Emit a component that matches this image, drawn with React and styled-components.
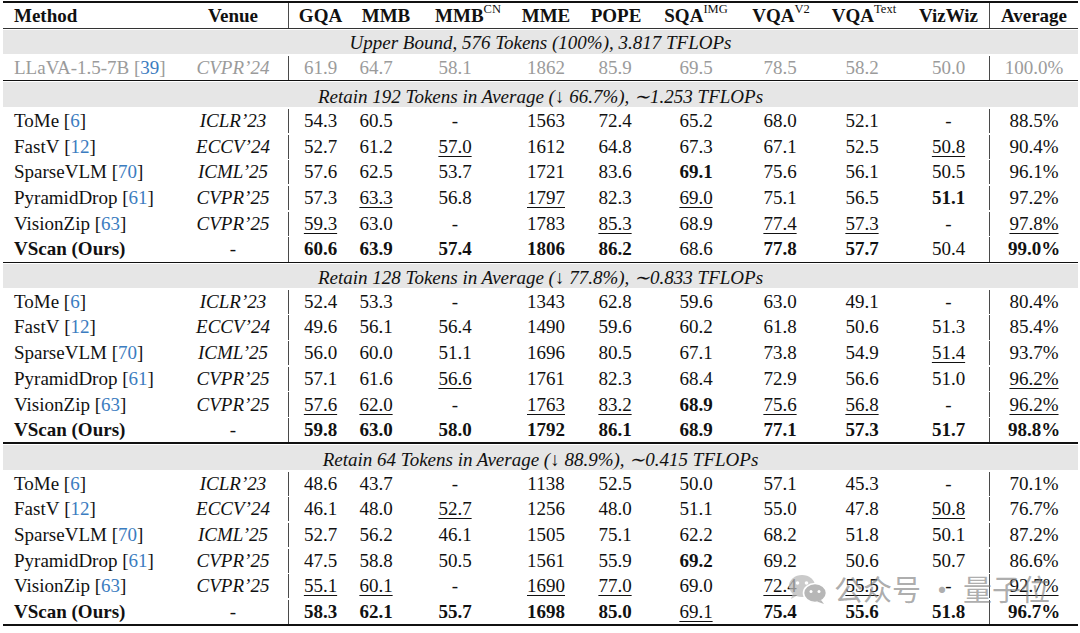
import React from "react";
import styled, { createGlobalStyle } from "styled-components";

const Global = createGlobalStyle`
  html, body { margin: 0; padding: 0; background: #ffffff; }
  body { font-family: "Liberation Serif", "Times New Roman", serif; color: #111; }
`;

const COLS = "175px 110px 64px 48px 110px 72px 66px 96px 72px 92px 81px 89px";

const Page = styled.div`
  position: relative;
  width: 1080px;
  height: 633px;
  overflow: hidden;
`;

const Table = styled.div`
  width: 1075px;
  margin-left: 3px;
  padding-top: 1px;
  display: flex;
  flex-direction: column;
  font-size: 19px;
`;

const Rule = styled.div`
  height: ${(p) => p.$h}px;
  background: ${(p) => p.$color || "#111"};
  margin-bottom: ${(p) => p.$gap || 0}px;
`;

const Row = styled.div`
  display: grid;
  grid-template-columns: ${COLS};
  height: ${(p) => p.$h}px;
  box-sizing: border-box;
  padding-top: ${(p) => p.$pt || 0}px;
  color: ${(p) => (p.$muted ? "#9b9b9b" : "#111")};
  font-weight: ${(p) => (p.$head ? 700 : 400)};
`;

const NameCell = styled.div`
  display: flex;
  align-items: center;
  padding-left: 11px;
  white-space: nowrap;
  font-weight: ${(p) => (p.$bold ? 700 : "inherit")};
`;

const Cell = styled.div`
  display: flex;
  align-items: center;
  justify-content: center;
  white-space: nowrap;
  min-width: 0;
  padding-left: ${(p) => (p.$shift ? p.$shift * 2 : 0)}px;
  border-left: ${(p) => (p.$divider ? "1px solid #4a4a4a" : "none")};
  font-style: ${(p) => (p.$italic ? "italic" : "inherit")};
`;

const Val = styled.span`
  font-weight: ${(p) => (p.$bold ? 700 : "inherit")};
  text-decoration: ${(p) => (p.$under ? "underline" : "none")};
  text-decoration-thickness: 1px;
  text-underline-offset: 3px;
`;

const Ref = styled.span`
  color: #3b7cc0;
`;

const Sup = styled.sup`
  font-size: 12.5px;
  font-weight: 400;
  vertical-align: 0;
  position: relative;
  top: -7px;
  line-height: 0;
`;

const GroupRow = styled.div`
  height: ${(p) => p.$h}px;
  box-sizing: border-box;
  padding-top: ${(p) => p.$pt}px;
  background: #e6e6e6;
  display: flex;
  align-items: center;
  justify-content: center;
  font-style: italic;
  white-space: nowrap;
`;

const Mark = styled.div`
  position: absolute;
  left: 788px;
  top: 574px;
  display: flex;
  align-items: center;
  gap: 6px;
  pointer-events: none;
`;

const MarkText = styled.span`
  font-family: "Noto Sans CJK SC", "Noto Sans", sans-serif;
  font-size: 29px;
  line-height: 1;
  margin-top: -2px;
  color: rgba(120, 120, 120, 0.62);
  white-space: nowrap;
`;

const HEAD = [
  { t: "GQA" },
  { t: "MMB", shift: 10 },
  { t: "MMB", sup: "CN", shift: 13 },
  { t: "MME" },
  { t: "POPE", shift: 1 },
  { t: "SQA", sup: "IMG" },
  { t: "VQA", sup: "V2", shift: 1 },
  { t: "VQA", sup: "Text", shift: 2 },
  { t: "VizWiz" },
];

const GROUPS = [
  {
    title: "Retain 192 Tokens in Average (\u2193 66.7%), \u223C1.253 TFLOPs",
    gh: 25,
    rows: [
      ["ToMe", "6", "ICLR\u201923", ["54.3", "60.5", "-", "1563", "72.4", "65.2", "68.0", "52.1", "-"], "88.5%"],
      ["FastV", "12", "ECCV\u201924", ["52.7", "61.2", "_57.0", "1612", "64.8", "67.3", "67.1", "52.5", "_50.8"], "90.4%"],
      ["SparseVLM", "70", "ICML\u201925", ["57.6", "62.5", "53.7", "1721", "83.6", "*69.1", "75.6", "56.1", "50.5"], "96.1%"],
      ["PyramidDrop", "61", "CVPR\u201925", ["57.3", "_63.3", "56.8", "_1797", "82.3", "_69.0", "75.1", "56.5", "*51.1"], "97.2%"],
      ["VisionZip", "63", "CVPR\u201925", ["_59.3", "63.0", "-", "1783", "_85.3", "68.9", "_77.4", "_57.3", "-"], "_97.8%"],
      ["VScan (Ours)", null, "-", ["*60.6", "*63.9", "*57.4", "*1806", "*86.2", "68.6", "*77.8", "*57.7", "50.4"], "*99.0%"],
    ],
  },
  {
    title: "Retain 128 Tokens in Average (\u2193 77.8%), \u223C0.833 TFLOPs",
    gh: 24,
    rows: [
      ["ToMe", "6", "ICLR\u201923", ["52.4", "53.3", "-", "1343", "62.8", "59.6", "63.0", "49.1", "-"], "80.4%"],
      ["FastV", "12", "ECCV\u201924", ["49.6", "56.1", "56.4", "1490", "59.6", "60.2", "61.8", "50.6", "51.3"], "85.4%"],
      ["SparseVLM", "70", "ICML\u201925", ["56.0", "60.0", "51.1", "1696", "80.5", "67.1", "73.8", "54.9", "_51.4"], "93.7%"],
      ["PyramidDrop", "61", "CVPR\u201925", ["57.1", "61.6", "_56.6", "1761", "82.3", "68.4", "72.9", "56.6", "51.0"], "_96.2%"],
      ["VisionZip", "63", "CVPR\u201925", ["_57.6", "_62.0", "-", "_1763", "_83.2", "*68.9", "_75.6", "_56.8", "-"], "_96.2%"],
      ["VScan (Ours)", null, "-", ["*59.8", "*63.0", "*58.0", "*1792", "*86.1", "*68.9", "*77.1", "*57.3", "*51.7"], "*98.8%"],
    ],
  },
  {
    title: "Retain 64 Tokens in Average (\u2193 88.9%), \u223C0.415 TFLOPs",
    gh: 25,
    rows: [
      ["ToMe", "6", "ICLR\u201923", ["48.6", "43.7", "-", "1138", "52.5", "50.0", "57.1", "45.3", "-"], "70.1%"],
      ["FastV", "12", "ECCV\u201924", ["46.1", "48.0", "_52.7", "1256", "48.0", "51.1", "55.0", "47.8", "_50.8"], "76.7%"],
      ["SparseVLM", "70", "ICML\u201925", ["52.7", "56.2", "46.1", "1505", "75.1", "62.2", "68.2", "51.8", "50.1"], "87.2%"],
      ["PyramidDrop", "61", "CVPR\u201925", ["47.5", "58.8", "50.5", "1561", "55.9", "*69.2", "69.2", "50.6", "50.7"], "86.6%"],
      ["VisionZip", "63", "CVPR\u201925", ["_55.1", "_60.1", "-", "_1690", "_77.0", "69.0", "_72.4", "_55.5", "-"], "_92.7%"],
      ["VScan (Ours)", null, "-", ["*58.3", "*62.1", "*55.7", "*1698", "*85.0", "_69.1", "*75.4", "*55.6", "*51.8"], "*96.7%"],
    ],
  },
];

function V({ v }) {
  const bold = v.startsWith("*");
  const under = v.startsWith("_");
  const text = bold || under ? v.slice(1) : v;
  return (
    <Val $bold={bold} $under={under}>
      {text}
    </Val>
  );
}

function DataRow({ name, refNo, venue, vals, avg, muted }) {
  const ours = !refNo;
  return (
    <Row $h={25.7} $pt={1.5} $muted={muted}>
      <NameCell $bold={ours}>
        {name}
        {refNo && (
          <>
            &nbsp;[<Ref>{refNo}</Ref>]
          </>
        )}
      </NameCell>
      <Cell $italic={!ours}>{venue}</Cell>
      {vals.map((v, i) => (
        <Cell key={i} $divider={i === 0}>
          <V v={v} />
        </Cell>
      ))}
      <Cell $divider>
        <V v={avg} />
      </Cell>
    </Row>
  );
}

function WeChatIcon() {
  return (
    <svg width="40" height="30" viewBox="0 0 40 30">
      <g opacity="0.75">
        <ellipse cx="14" cy="12" rx="13" ry="11" fill="#b9b9b9" />
        <path d="M5 19 L3 25 L10 21 Z" fill="#b9b9b9" />
        <circle cx="9.5" cy="9" r="1.8" fill="#fff" />
        <circle cx="18.5" cy="9" r="1.8" fill="#fff" />
        <ellipse cx="27" cy="19" rx="11.5" ry="9.5" fill="#9f9f9f" stroke="#fff" strokeWidth="1.6" />
        <path d="M33 26 L36 30 L29 27.5 Z" fill="#9f9f9f" />
        <circle cx="23" cy="17.5" r="1.5" fill="#fff" />
        <circle cx="31" cy="17.5" r="1.5" fill="#fff" />
      </g>
    </svg>
  );
}

export default function App() {
  return (
    <Page>
      <Global />
      <Table>
        <Rule $h={2} />
        <Row $h={25} $head>
          <NameCell>Method</NameCell>
          <Cell>Venue</Cell>
          {HEAD.map((h, i) => (
            <Cell key={i} $divider={i === 0} $shift={h.shift}>
              {h.t}
              {h.sup && <Sup>{h.sup}</Sup>}
            </Cell>
          ))}
          <Cell $divider>Average</Cell>
        </Row>
        <Rule $h={1} $color="#333" $gap={1} />
        <GroupRow $h={24} $pt={1}>Upper Bound, 576 Tokens (100%), 3.817 TFLOPs</GroupRow>
        <DataRow
          name="LLaVA-1.5-7B"
          refNo="39"
          venue={"CVPR\u201924"}
          vals={["61.9", "64.7", "58.1", "1862", "85.9", "69.5", "78.5", "58.2", "50.0"]}
          avg="100.0%"
          muted
        />
        {GROUPS.map((g, gi) => (
          <React.Fragment key={gi}>
            <Rule $h={1.5} $gap={1.2} />
            <GroupRow $h={g.gh} $pt={3}>{g.title}</GroupRow>
            {g.rows.map((r, ri) => (
              <DataRow key={ri} name={r[0]} refNo={r[1]} venue={r[2]} vals={r[3]} avg={r[4]} />
            ))}
          </React.Fragment>
        ))}
        <Rule $h={2} />
      </Table>
      <Mark>
        <WeChatIcon />
        <MarkText>公众号 ·&nbsp;量子位</MarkText>
      </Mark>
    </Page>
  );
}
